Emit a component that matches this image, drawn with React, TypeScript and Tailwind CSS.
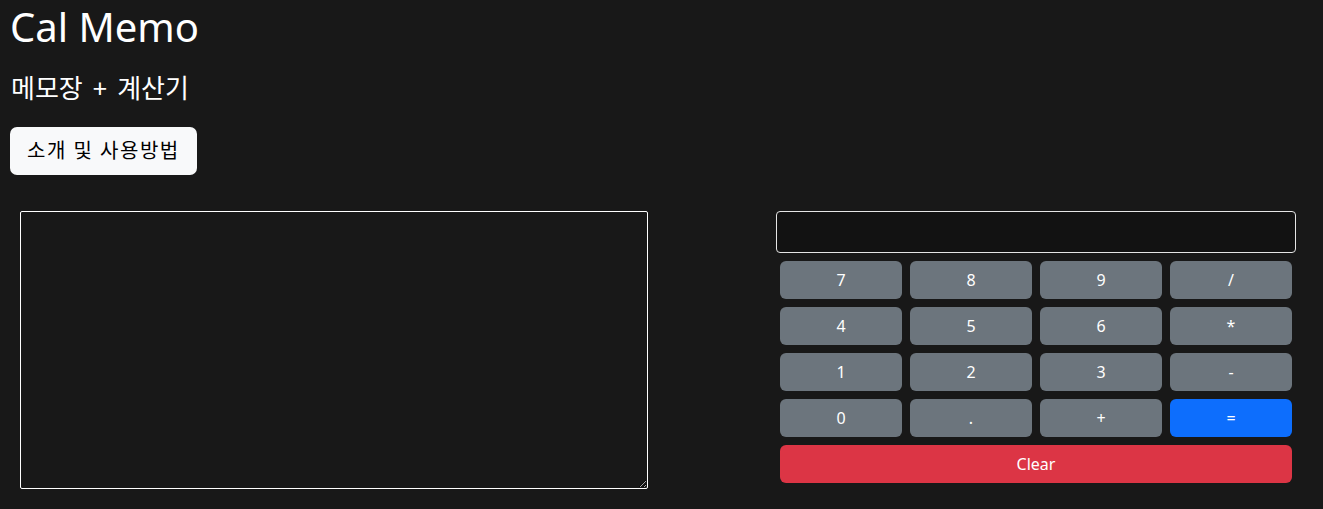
const keys: { label: string; tone: 'gray' | 'blue' }[] = [
  { label: '7', tone: 'gray' },
  { label: '8', tone: 'gray' },
  { label: '9', tone: 'gray' },
  { label: '/', tone: 'gray' },
  { label: '4', tone: 'gray' },
  { label: '5', tone: 'gray' },
  { label: '6', tone: 'gray' },
  { label: '*', tone: 'gray' },
  { label: '1', tone: 'gray' },
  { label: '2', tone: 'gray' },
  { label: '3', tone: 'gray' },
  { label: '-', tone: 'gray' },
  { label: '0', tone: 'gray' },
  { label: '.', tone: 'gray' },
  { label: '+', tone: 'gray' },
  { label: '=', tone: 'blue' },
];

export default function App() {
  return (
    <div
      className="min-h-screen bg-[#181818] text-white"
      style={{ fontFamily: '"Noto Sans", "Noto Sans CJK KR", sans-serif' }}
    >
      <header className="pl-[10px]">
        <h1 className="pt-[3px] text-[40px] leading-[48px] font-normal">Cal Memo</h1>
        <h2 className="mt-[22px] pl-[1px] text-[26px] leading-[30px] font-normal [word-spacing:3px]">
          메모장 + 계산기
        </h2>
        <button
          type="button"
          className="mt-[24px] h-[48px] rounded-[7px] bg-[#f8f9fa] px-[17px] text-[20px] leading-[30px] tracking-[1.5px] text-black"
        >
          소개 및 사용방법
        </button>
      </header>

      <main className="mt-[36px] flex items-start">
        <textarea className="ml-[20px] h-[278px] w-[628px] resize-y rounded-[2px] border border-white bg-transparent p-2 text-white outline-none" />

        <section className="ml-[128px] w-[520px]">
          <input
            type="text"
            className="h-[42px] w-full rounded-[4px] border border-[#e5e5e5] bg-[#121212] px-3 text-white outline-none"
          />
          <div className="mt-[8px] grid grid-cols-4 gap-[8px] px-[4px]">
            {keys.map(k => (
              <button
                key={k.label}
                type="button"
                className={
                  k.tone === 'blue'
                    ? 'h-[38px] rounded-[6px] bg-[#0d6efd] text-[16px] text-white'
                    : 'h-[38px] rounded-[6px] bg-[#6c757d] text-[16px] text-white'
                }
              >
                {k.label}
              </button>
            ))}
            <button
              type="button"
              className="col-span-4 h-[38px] rounded-[6px] bg-[#dc3545] text-[16px] text-white"
            >
              Clear
            </button>
          </div>
        </section>
      </main>
    </div>
  );
}
